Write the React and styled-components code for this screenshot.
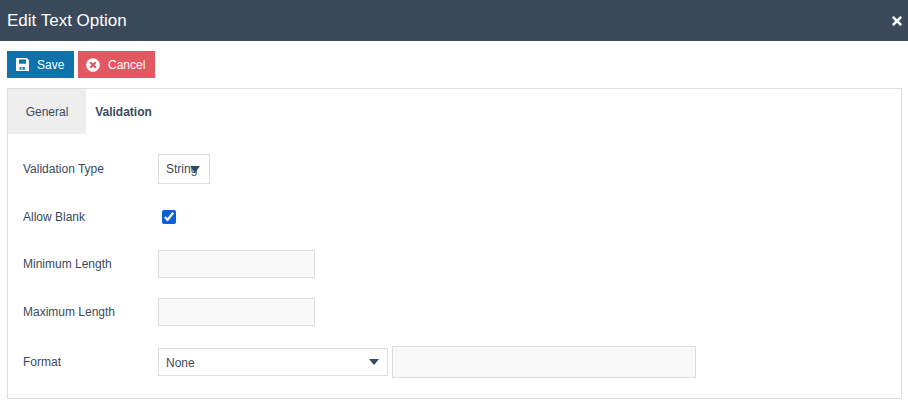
import React from "react";
import styled, { createGlobalStyle } from "styled-components";
import { FaTimesCircle, FaTimes } from "react-icons/fa";

const Global = createGlobalStyle`
  html, body { margin: 0; padding: 0; background: #fff; }
  body { font-family: "Liberation Sans", Arial, sans-serif; color: #3a4a5c; }
`;

const Dialog = styled.div`
  width: 908px;
  height: 405px;
  display: flex;
  flex-direction: column;
  overflow: hidden;
`;

const Header = styled.header`
  height: 41px;
  flex: none;
  background: #3a4a5b;
  color: #fff;
  display: flex;
  align-items: center;
  justify-content: space-between;
  padding: 0 4px 0 7px;
`;

const Title = styled.h1`
  margin: 0;
  font-size: 17px;
  font-weight: 400;
  line-height: 40px;
`;

const Close = styled.button`
  border: 0;
  background: none;
  color: #fff;
  padding: 0;
  margin-top: 0;
  display: flex;
  font-size: 14px;
`;

const Toolbar = styled.div`
  display: flex;
  gap: 4px;
  padding: 10px 7px;
`;

const Button = styled.button`
  height: 27px;
  width: ${(p) => p.$width}px;
  border: 0;
  padding: 0 0 0 ${(p) => p.$pad}px;
  background: ${(p) => p.$bg};
  color: #fff;
  font: 12px "Liberation Sans", Arial, sans-serif;
  display: flex;
  align-items: center;
  gap: ${(p) => p.$gap}px;
  svg { flex: none; }
`;

const Panel = styled.section`
  margin: 0 6px 0 7px;
  border: 1px solid #ddd;
  display: flex;
  flex-direction: column;
`;

const Tabs = styled.nav`
  display: flex;
  height: 45px;
`;

const Tab = styled.div`
  width: ${(p) => p.$width}px;
  display: flex;
  align-items: center;
  justify-content: center;
  font-size: 12px;
  font-weight: ${(p) => (p.$active ? 700 : 400)};
  background: ${(p) => (p.$active ? "#fff" : "#eee")};
`;

const Form = styled.form`
  padding: 20px 15px 20px;
  display: flex;
  flex-direction: column;
  gap: 20px;
`;

const Row = styled.div`
  display: flex;
  align-items: center;
  min-height: ${(p) => p.$min || 0}px;
`;

const Label = styled.label`
  width: 135px;
  flex: none;
  font-size: 12px;
  line-height: 14px;
  margin-top: ${(p) => p.$shift || 0}px;
`;

const SelectBox = styled.div`
  position: relative;
  box-sizing: border-box;
  width: ${(p) => p.$width}px;
  height: ${(p) => p.$height}px;
  border: 1px solid #ddd;
  background: #fff;
  padding: ${(p) => p.$drop || 0}px 0 0 7px;
  display: flex;
  align-items: center;
  font-size: 12px;
  white-space: nowrap;
  overflow: hidden;
`;

const Caret = styled.i`
  position: absolute;
  right: ${(p) => p.$right}px;
  top: 50%;
  margin-top: -3px;
  width: 0;
  height: 0;
  border-left: 5px solid transparent;
  border-right: 5px solid transparent;
  border-top: ${(p) => p.$tall}px solid #3a4a5b;
`;

const TextInput = styled.input`
  box-sizing: border-box;
  width: ${(p) => p.$width}px;
  height: ${(p) => p.$height}px;
  border: 1px solid #ddd;
  background: #f8f8f8;
  padding: 0 7px;
  margin: 0;
  border-radius: 0;
  outline: 0;
`;

const CheckCell = styled.div`
  padding-left: 4px;
  display: flex;
`;

const Check = styled.input`
  width: 14px;
  height: 14px;
  margin: 0;
  accent-color: #0a60d8;
`;

const FieldGroup = styled.div`
  display: flex;
  align-items: center;
  gap: 4px;
`;

const SaveIcon = () => (
  <svg width="13" height="13" viewBox="0 0 13 13" aria-hidden="true">
    <path
      fill="#fff"
      fillRule="evenodd"
      d="M0 0H10.8L13 2.2V13H0ZM3 1.4V5.8H10V1.4ZM3.6 9V11.8H8.8V9ZM5.2 9.6H6.8V11.2H5.2Z"
    />
  </svg>
);

export default function App() {
  return (
    <Dialog>
      <Global />
      <Header>
        <Title>Edit Text Option</Title>
        <Close aria-label="Close"><FaTimes /></Close>
      </Header>
      <Toolbar>
        <Button $width={67} $pad={9} $gap={8} $bg="#0f72aa"><SaveIcon />Save</Button>
        <Button $width={77} $pad={8} $gap={8} $bg="#e15762"><FaTimesCircle size={14} />Cancel</Button>
      </Toolbar>
      <Panel>
        <Tabs>
          <Tab $width={78}>General</Tab>
          <Tab $width={75} $active>Validation</Tab>
        </Tabs>
        <Form>
          <Row>
            <Label>Validation Type</Label>
            <SelectBox $width={52} $height={30}>String<Caret $right={9} $tall={7} /></SelectBox>
          </Row>
          <Row $min={26}>
            <Label>Allow Blank</Label>
            <CheckCell><Check type="checkbox" defaultChecked /></CheckCell>
          </Row>
          <Row>
            <Label>Minimum Length</Label>
            <TextInput $width={157} $height={28} />
          </Row>
          <Row>
            <Label>Maximum Length</Label>
            <TextInput $width={157} $height={28} />
          </Row>
          <Row>
            <Label $shift={-1}>Format</Label>
            <FieldGroup>
              <SelectBox $width={230} $height={28} $drop={1}>None<Caret $right={8} $tall={6} /></SelectBox>
              <TextInput $width={304} $height={32} />
            </FieldGroup>
          </Row>
        </Form>
      </Panel>
    </Dialog>
  );
}
